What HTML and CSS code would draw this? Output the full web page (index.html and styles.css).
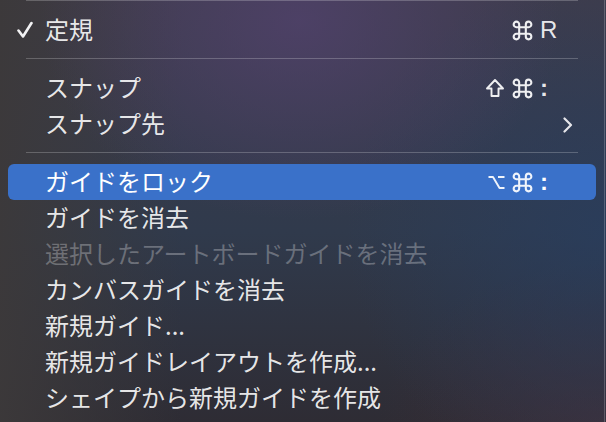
FILE: index.html
```html
<!DOCTYPE html>
<html lang="ja">
  <head>
    <meta charset="UTF-8" />
    <title>ガイドメニュー</title>
    <link rel="stylesheet" href="styles.css">
  </head>
  <body>
    <div class="menu">
      <div class="sep first"></div>
      <div class="item">
        <span class="mark">
          <svg width="16" height="18" viewBox="0 0 16 18">
            <polyline points="1.5,9.5 6,15.5 14.5,2" fill="none" stroke="#f2f2f4" stroke-width="2.6" stroke-linecap="round" stroke-linejoin="round" />
          </svg>
        </span>
        <span class="label">定規</span>
        <span class="mods">
          <svg class="cmd" width="21" height="21" viewBox="0 0 19 19">
            <path d="M6.5 6.5 V4 A2.5 2.5 0 1 0 4 6.5 H15 A2.5 2.5 0 1 0 12.5 4 V15 A2.5 2.5 0 1 0 15 12.5 H4 A2.5 2.5 0 1 0 6.5 15 Z" />
          </svg>
        </span><span class="key">R</span>
      </div>
      <div class="sep"></div>
      <div class="item">
        <span class="mark"></span>
        <span class="label">スナップ</span>
        <span class="mods">
          <svg class="sym" width="20" height="20" viewBox="0 0 20 20">
            <path d="M10 2 L18 10.5 H13.5 V18 H6.5 V10.5 H2 Z" />
          </svg>
          <svg class="cmd" width="21" height="21" viewBox="0 0 19 19">
            <path d="M6.5 6.5 V4 A2.5 2.5 0 1 0 4 6.5 H15 A2.5 2.5 0 1 0 12.5 4 V15 A2.5 2.5 0 1 0 15 12.5 H4 A2.5 2.5 0 1 0 6.5 15 Z" />
          </svg>
        </span><span class="key colon">:</span>
      </div>
      <div class="item">
        <span class="mark"></span>
        <span class="label">スナップ先</span>
        <span class="key sub">
          <svg width="10" height="16" viewBox="0 0 10 16">
            <polyline points="1.5,1.5 8,8 1.5,14.5" fill="none" stroke="#e6e6ea" stroke-width="2.2" stroke-linecap="round" stroke-linejoin="round" />
          </svg>
        </span>
      </div>
      <div class="sep"></div>
      <div class="item active">
        <span class="mark"></span>
        <span class="label">ガイドをロック</span>
        <span class="mods">
          <svg class="sym" width="17" height="16" viewBox="0 0 17 16">
            <path d="M0.5 3 H5 L11.5 14 H16.5 M10 3 H16.5" />
          </svg>
          <svg class="cmd" width="21" height="21" viewBox="0 0 19 19">
            <path d="M6.5 6.5 V4 A2.5 2.5 0 1 0 4 6.5 H15 A2.5 2.5 0 1 0 12.5 4 V15 A2.5 2.5 0 1 0 15 12.5 H4 A2.5 2.5 0 1 0 6.5 15 Z" />
          </svg>
        </span><span class="key colon">:</span>
      </div>
      <div class="item">
        <span class="mark"></span>
        <span class="label">ガイドを消去</span>
      </div>
      <div class="item disabled">
        <span class="mark"></span>
        <span class="label">選択したアートボードガイドを消去</span>
      </div>
      <div class="item">
        <span class="mark"></span>
        <span class="label">カンバスガイドを消去</span>
      </div>
      <div class="item">
        <span class="mark"></span>
        <span class="label">新規ガイド...</span>
      </div>
      <div class="item">
        <span class="mark"></span>
        <span class="label">新規ガイドレイアウトを作成...</span>
      </div>
      <div class="item">
        <span class="mark"></span>
        <span class="label">シェイプから新規ガイドを作成</span>
      </div>
    </div>
  </body>
</html>
```

FILE: styles.css
```css
* {
  box-sizing: border-box;
}
body {
  margin: 0;
  width: 606px;
  height: 422px;
  overflow: hidden;
  font-family: "Noto Sans CJK JP", "Noto Sans", sans-serif;
  background:
    radial-gradient(ellipse 260px 200px at 300px 20px, rgba(82, 66, 110, 0.75), transparent),
    radial-gradient(ellipse 260px 260px at 606px 230px, rgba(40, 62, 96, 0.7), transparent),
    radial-gradient(ellipse 220px 160px at 600px 422px, rgba(66, 48, 58, 0.7), transparent),
    linear-gradient(to right, rgba(60, 57, 58, 0.95), rgba(60, 57, 58, 0) 30%),
    linear-gradient(to bottom, #3e3c4c 0%, #303a4c 55%, #2e2c34 100%);
}
.menu {
  width: 605px;
  height: 422px;
  border-right: 1px solid rgba(255, 255, 255, 0.2);
  color: rgba(255, 255, 255, 0.9);
}
.sep {
  height: 1px;
  margin: 10px 26px 11px;
  background: rgba(255, 255, 255, 0.22);
}
.sep.first {
  margin-top: 0;
}
.item {
  display: flex;
  align-items: center;
  height: 36px;
  margin: 0 8px;
  padding-bottom: 3px;
  border-radius: 6px;
  font-size: 24px;
  line-height: 32px;
}
.item.active {
  background: #3a71c9;
  color: #ffffff;
}
.item.disabled {
  color: rgba(255, 255, 255, 0.28);
}
.mark {
  width: 37px;
  display: flex;
  align-items: center;
  padding-left: 9px;
  padding-top: 3px;
}
.label {
  flex: 1;
  white-space: nowrap;
}
.mods {
  display: flex;
  align-items: center;
  gap: 7px;
  margin-right: 7px;
  padding-top: 3px;
}
.mods svg {
  fill: none;
  stroke: rgba(255, 255, 255, 0.92);
  stroke-width: 1.9;
}
.mods .sym {
  stroke-linejoin: round;
}
.key {
  width: 56px;
  font-family: "Liberation Sans", sans-serif;
  font-size: 24px;
  padding-top: 2px;
}
.key.colon {
  font-weight: bold;
}
.key.sub {
  display: flex;
  align-items: center;
  padding-left: 23px;
  padding-top: 5px;
}
```
